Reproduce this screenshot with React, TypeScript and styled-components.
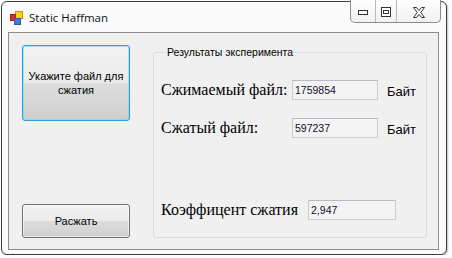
import React from 'react';
import styled, { createGlobalStyle } from 'styled-components';

const GlobalStyle = createGlobalStyle`
  html, body {
    margin: 0;
    padding: 0;
    background: #ffffff;
  }
  * {
    box-sizing: border-box;
  }
`;

const Window = styled.div`
  margin: 1px 0 0 1px;
  width: 446px;
  height: 254px;
  border: 1px solid #3c3c3c;
  border-radius: 6px;
  background: #fbfbfb;
  box-shadow: 1px 1px 2px rgba(0, 0, 0, 0.25);
  display: flex;
  flex-direction: column;
  font-family: 'Liberation Sans', Arial, sans-serif;
`;

const TitleBar = styled.div`
  height: 30px;
  display: flex;
  align-items: flex-start;
  flex-shrink: 0;
`;

const AppIcon = styled.svg`
  margin: 9px 0 0 8px;
  flex-shrink: 0;
`;

const Title = styled.span`
  margin: 8px 0 0 6px;
  font-family: 'Open Sans', 'Noto Sans', sans-serif;
  font-size: 11.5px;
  line-height: 16px;
  color: #111;
`;

const CaptionGroup = styled.div`
  margin: -2px 5px 0 auto;
  height: 23px;
  display: flex;
  border: 1px solid #8c8c8c;
  border-top: none;
  border-radius: 0 0 5px 5px;
  background: linear-gradient(#ffffff, #f1f1f1);
  overflow: hidden;
`;

const CaptionButton = styled.div<{ $w: number; $last?: boolean }>`
  width: ${(p) => p.$w}px;
  display: flex;
  align-items: center;
  justify-content: center;
  padding-top: 2px;
  border-right: ${(p) => (p.$last ? 'none' : '1px solid #b9b9b9')};
`;

const Client = styled.div`
  flex: 1;
  margin: 0 7px 4px 6px;
  border: 1px solid #8d8d8d;
  background: #f0f0f0;
  display: grid;
  grid-template-columns: 108px 1fr;
  column-gap: 23px;
  padding: 12px 11px 11px 13px;
`;

const ButtonColumn = styled.div`
  display: flex;
  flex-direction: column;
  justify-content: space-between;
`;

const WinButton = styled.button<{ $h: number; $focused?: boolean }>`
  width: 108px;
  height: ${(p) => p.$h}px;
  border: 1px solid ${(p) => (p.$focused ? '#2c9fe0' : '#707070')};
  border-radius: 3px;
  background: linear-gradient(#f2f2f2 0%, #ebebeb 50%, #dddddd 51%, #cfcfcf 100%);
  box-shadow: inset 0 0 0 1px ${(p) => (p.$focused ? 'rgba(120, 210, 250, 0.6)' : 'rgba(255,255,255,0.6)')};
  font-family: 'Liberation Sans', Arial, sans-serif;
  font-size: 11px;
  line-height: 14px;
  color: #000;
  padding: 0 2px;
  text-align: center;
`;

const GroupBox = styled.fieldset`
  margin: 1px 0 0 0;
  padding: 0 0 17px 7px;
  min-width: 0;
  border: 1px solid #d3dce3;
  border-radius: 3px;
  display: flex;
  flex-direction: column;
`;

const GroupLegend = styled.legend`
  margin-left: 5px;
  padding: 0 1px;
  font-size: 10.5px;
  line-height: 12px;
  color: #000;
`;

const Rows = styled.div`
  flex: 1;
  display: flex;
  flex-direction: column;
  gap: 18px;
  padding-top: 22px;
`;

const ValueRow = styled.div<{ $push?: boolean }>`
  display: flex;
  align-items: center;
  height: 20px;
  margin-top: ${(p) => (p.$push ? 'auto' : '0')};
`;

const Caption = styled.span<{ $w?: number }>`
  width: ${(p) => (p.$w ? `${p.$w}px` : 'auto')};
  margin-right: ${(p) => (p.$w ? '0' : '10px')};
  font-family: 'Liberation Serif', 'Times New Roman', serif;
  font-size: 16px;
  color: #000;
  white-space: nowrap;
`;

const ValueBox = styled.div<{ $w: number }>`
  width: ${(p) => p.$w}px;
  height: 20px;
  border: 1px solid #c9cdd3;
  border-top-color: #b8bcc2;
  background: #f3f3f3;
  font-size: 10.5px;
  line-height: 18px;
  padding-left: 2px;
  color: #101028;
`;

const Unit = styled.span`
  margin-left: 9px;
  font-size: 13px;
  color: #000;
  padding-top: 2px;
`;

const App: React.FC = () => {
  const rows = [
    { label: 'Сжимаемый файл:', value: '1759854' },
    { label: 'Сжатый файл:', value: '597237' },
  ];

  return (
    <>
      <GlobalStyle />
      <Window>
        <TitleBar>
          <AppIcon width="13" height="14" viewBox="0 0 13 14">
            <rect x="5.5" y="0.5" width="7" height="7" fill="#f7d21a" stroke="#d08a18" />
            <rect x="0.5" y="3.5" width="5" height="6" fill="#d8302c" stroke="#a32020" />
            <rect x="4.5" y="7.5" width="6" height="6" fill="#3d7ee0" stroke="#2a58b0" />
          </AppIcon>
          <Title>Static Haffman</Title>
          <CaptionGroup>
            <CaptionButton $w={25}>
              <svg width="10" height="6" viewBox="0 0 10 6">
                <rect x="0.5" y="1.5" width="9" height="4" fill="#fff" stroke="#333" />
              </svg>
            </CaptionButton>
            <CaptionButton $w={21}>
              <svg width="10" height="10" viewBox="0 0 10 10">
                <rect x="0.5" y="0.5" width="9" height="9" fill="#fff" stroke="#333" />
                <rect x="2.5" y="3.5" width="5" height="3" fill="none" stroke="#333" />
              </svg>
            </CaptionButton>
            <CaptionButton $w={43} $last>
              <svg width="12" height="11" viewBox="0 0 12 11">
                <path
                  d="M0.5 0.5 H3.5 L6 3.5 L8.5 0.5 H11.5 L7.8 5.5 L11.5 10.5 H8.5 L6 7.5 L3.5 10.5 H0.5 L4.2 5.5 Z"
                  fill="#fff"
                  stroke="#333"
                  strokeLinejoin="round"
                />
              </svg>
            </CaptionButton>
          </CaptionGroup>
        </TitleBar>
        <Client>
          <ButtonColumn>
            <WinButton $h={76} $focused>
              Укажите файл для сжатия
            </WinButton>
            <WinButton $h={34}>Расжать</WinButton>
          </ButtonColumn>
          <GroupBox>
            <GroupLegend>Результаты эксперимента</GroupLegend>
            <Rows>
              {rows.map((row, index) => (
                <ValueRow key={index}>
                  <Caption $w={131}>{row.label}</Caption>
                  <ValueBox $w={86}>{row.value}</ValueBox>
                  <Unit>Байт</Unit>
                </ValueRow>
              ))}
              <ValueRow $push>
                <Caption>Коэффицент сжатия</Caption>
                <ValueBox $w={88}>2,947</ValueBox>
              </ValueRow>
            </Rows>
          </GroupBox>
        </Client>
      </Window>
    </>
  );
};

export default App;
